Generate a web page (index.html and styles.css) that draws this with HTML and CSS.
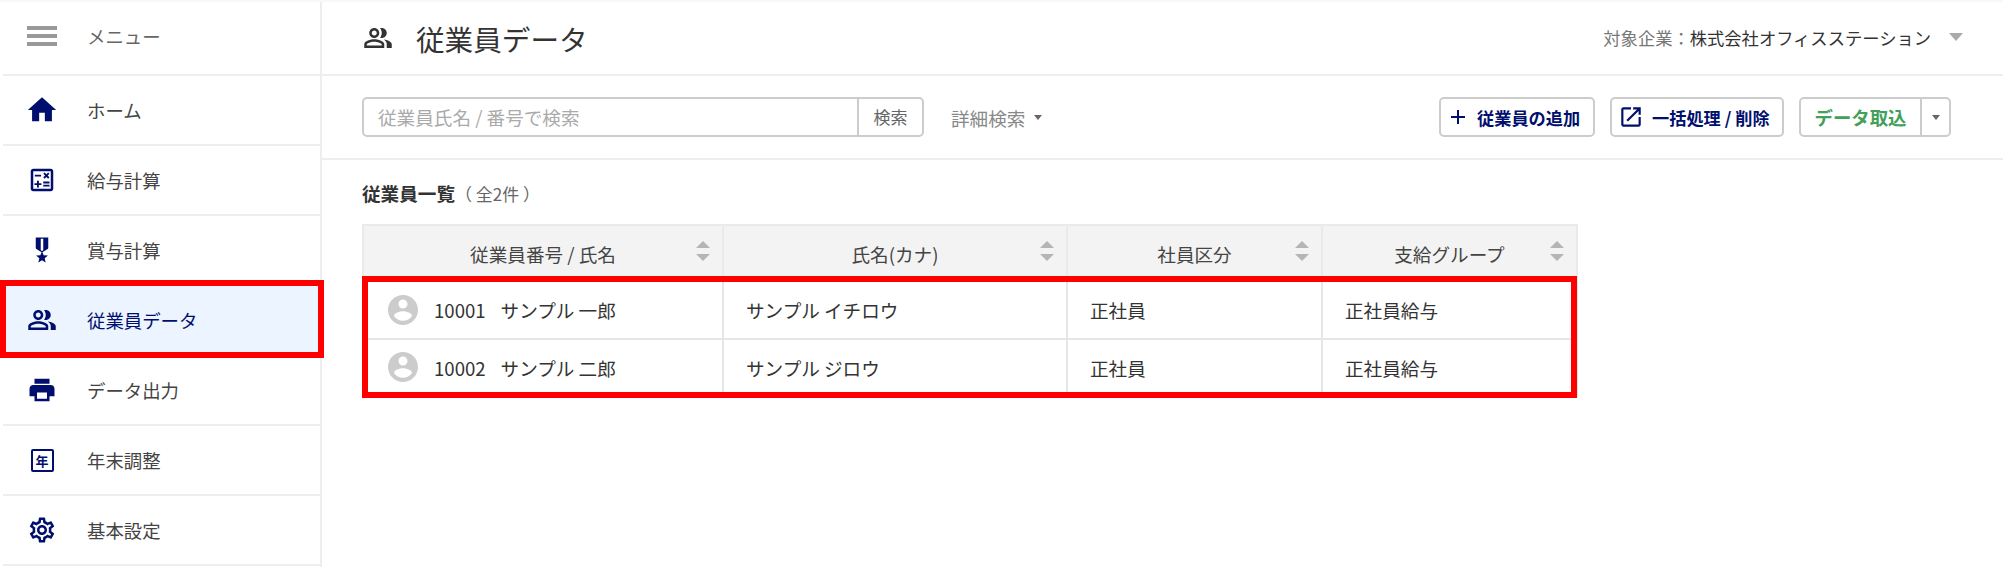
FILE: index.html
```html
<!DOCTYPE html>
<html lang="ja">
<head>
    <meta charset="UTF-8">
    <title>従業員データ</title>
    <link rel="stylesheet" href="styles.css">
</head>
<body>
    <svg class="sprite" xmlns="http://www.w3.org/2000/svg">
        <symbol id="i-home" viewBox="0 0 24 24"><path d="M10 20v-6h4v6h5v-8h3L12 3 2 12h3v8z"/></symbol>
        <symbol id="i-calc" viewBox="0 0 24 24"><path d="M19 3H5c-1.1 0-2 .9-2 2v14c0 1.1.9 2 2 2h14c1.1 0 2-.9 2-2V5c0-1.1-.9-2-2-2zm0 16H5V5h14v14z"/><path d="M6.25 7.72h5v1.5h-5zM13 15.75h5v1.5h-5zM13 13.25h5v1.5h-5zM8 18h1.5v-2h2v-1.5h-2v-2H8v2H6V16h2zM14.09 10.95l1.41-1.41 1.41 1.41 1.06-1.06-1.41-1.42 1.41-1.41L16.91 6 15.5 7.41 14.09 6l-1.06 1.06 1.41 1.41-1.41 1.42z"/></symbol>
        <symbol id="i-medal" viewBox="0 0 24 24"><path d="M17 10.43V2H7v8.43c0 .35.18.68.49.86l4.18 2.51-.99 2.34-3.41.29 2.59 2.24L9.07 22 12 20.23 14.93 22l-.78-3.33 2.59-2.24-3.41-.29-.99-2.34 4.18-2.51c.3-.18.48-.5.48-.86zm-4 1.8l-1 .6-1-.6V3h2v9.23z"/></symbol>
        <symbol id="i-people" viewBox="0 0 24 24"><path d="M16.67 13.13C18.04 14.06 19 15.32 19 17v3h4v-3c0-2.18-3.57-3.47-6.33-3.87z"/><path d="M15 12c2.21 0 4-1.79 4-4s-1.79-4-4-4c-.47 0-.91.1-1.33.24C14.5 5.27 15 6.58 15 8s-.5 2.73-1.33 3.76c.42.14.86.24 1.33.24z"/><path d="M9 12c2.21 0 4-1.79 4-4s-1.79-4-4-4-4 1.79-4 4 1.79 4 4 4zm0-6c1.1 0 2 .9 2 2s-.9 2-2 2-2-.9-2-2 .9-2 2-2z"/><path d="M9 13c-2.67 0-8 1.34-8 4v3h16v-3c0-2.66-5.33-4-8-4zm6 5H3v-.99C3.2 16.29 6.3 15 9 15s5.8 1.29 6 2v1z"/></symbol>
        <symbol id="i-print" viewBox="0 0 24 24"><path d="M19 8H5c-1.66 0-3 1.34-3 3v6h4v4h12v-4h4v-6c0-1.66-1.34-3-3-3zm-3 11H8v-5h8v5zm2-16H6v4h12V3z"/></symbol>
        <symbol id="i-gear" viewBox="0 0 24 24"><path d="M19.43 12.98c.04-.32.07-.64.07-.98 0-.34-.03-.66-.07-.98l2.11-1.65c.19-.15.24-.42.12-.64l-2-3.46c-.09-.16-.26-.25-.44-.25-.06 0-.12.01-.17.03l-2.49 1c-.52-.4-1.08-.73-1.69-.98l-.38-2.65C14.46 2.18 14.25 2 14 2h-4c-.25 0-.46.18-.49.42l-.38 2.65c-.61.25-1.17.59-1.69.98l-2.49-1c-.06-.02-.12-.03-.18-.03-.17 0-.34.09-.43.25l-2 3.46c-.13.22-.07.49.12.64l2.11 1.65c-.04.32-.07.65-.07.98 0 .33.03.66.07.98l-2.11 1.65c-.19.15-.24.42-.12.64l2 3.46c.09.16.26.25.44.25.06 0 .12-.01.17-.03l2.49-1c.52.4 1.08.73 1.69.98l.38 2.65c.03.24.24.42.49.42h4c.25 0 .46-.18.49-.42l.38-2.65c.61-.25 1.17-.59 1.69-.98l2.49 1c.06.02.12.03.18.03.17 0 .34-.09.43-.25l2-3.46c.12-.22.07-.49-.12-.64l-2.11-1.65zm-1.98-1.71c.04.31.05.52.05.73 0 .21-.02.43-.05.73l-.14 1.13.89.7 1.08.84-.7 1.21-1.27-.51-1.04-.42-.9.68c-.43.32-.84.56-1.25.73l-1.06.43-.16 1.13-.2 1.35h-1.4l-.19-1.35-.16-1.13-1.06-.43c-.43-.18-.83-.41-1.23-.71l-.91-.7-1.06.43-1.27.51-.7-1.21 1.08-.84.89-.7-.14-1.13c-.03-.31-.05-.54-.05-.74s.02-.43.05-.73l.14-1.13-.89-.7-1.08-.84.7-1.21 1.27.51 1.04.42.9-.68c.43-.32.84-.56 1.25-.73l1.06-.43.16-1.13.2-1.35h1.39l.19 1.35.16 1.13 1.06.43c.43.18.83.41 1.23.71l.91.7 1.06-.43 1.27-.51.7 1.21-1.07.85-.89.7.14 1.13zM12 8c-2.21 0-4 1.79-4 4s1.79 4 4 4 4-1.79 4-4-1.79-4-4-4zm0 6c-1.1 0-2-.9-2-2s.9-2 2-2 2 .9 2 2-.9 2-2 2z"/></symbol>
        <symbol id="i-add" viewBox="0 0 24 24"><path d="M19 13h-6v6h-2v-6H5v-2h6V5h2v6h6v2z"/></symbol>
        <symbol id="i-open" viewBox="0 0 24 24"><path d="M19 19H5V5h7V3H5c-1.11 0-2 .9-2 2v14c0 1.1.89 2 2 2h14c1.1 0 2-.9 2-2v-7h-2v7zM14 3v2h3.59l-9.83 9.83 1.41 1.41L19 6.41V10h2V3h-7z"/></symbol>
        <symbol id="i-account" viewBox="0 0 24 24"><path d="M12 2C6.48 2 2 6.48 2 12s4.48 10 10 10 10-4.48 10-10S17.52 2 12 2zm0 3c1.66 0 3 1.34 3 3s-1.34 3-3 3-3-1.34-3-3 1.34-3 3-3zm0 14.2c-2.5 0-4.71-1.28-6-3.22.03-1.99 4-3.08 6-3.08 1.99 0 5.97 1.09 6 3.08-1.29 1.94-3.5 3.22-6 3.22z"/></symbol>
    </svg>

    <div class="app">
        <nav class="sidebar">
            <div class="nav-item nav-head">
                <span class="nav-icon"><span class="burger"><i></i><i></i><i></i></span></span>
                <span>メニュー</span>
            </div>
            <a class="nav-item"><span class="nav-icon"><svg class="icon-home"><use href="#i-home"/></svg></span><span>ホーム</span></a>
            <a class="nav-item"><span class="nav-icon"><svg><use href="#i-calc"/></svg></span><span>給与計算</span></a>
            <a class="nav-item"><span class="nav-icon"><svg><use href="#i-medal"/></svg></span><span>賞与計算</span></a>
            <a class="nav-item active"><span class="nav-icon"><svg><use href="#i-people"/></svg></span><span>従業員データ</span></a>
            <a class="nav-item"><span class="nav-icon"><svg><use href="#i-print"/></svg></span><span>データ出力</span></a>
            <a class="nav-item"><span class="nav-icon"><span class="year-box">年</span></span><span>年末調整</span></a>
            <a class="nav-item"><span class="nav-icon"><svg><use href="#i-gear"/></svg></span><span>基本設定</span></a>
            <div class="mark mark-nav"></div>
        </nav>

        <main class="main">
            <header class="topbar">
                <h1 class="page-title"><svg><use href="#i-people"/></svg>従業員データ</h1>
                <div class="company">
                    <span class="company-label">対象企業：</span><span class="company-name">株式会社オフィスステーション</span>
                    <span class="company-caret"></span>
                </div>
            </header>

            <div class="toolbar">
                <div class="search">
                    <div class="search-input">従業員氏名 / 番号で検索</div>
                    <div class="search-btn">検索</div>
                </div>
                <div class="detail-search">詳細検索<span class="caret"></span></div>
                <div class="actions">
                    <div class="btn btn-add"><svg><use href="#i-add"/></svg>従業員の追加</div>
                    <div class="btn btn-bulk"><svg><use href="#i-open"/></svg>一括処理 / 削除</div>
                    <div class="btn-group">
                        <div class="btn-import">データ取込</div>
                        <div class="btn-more"><span class="caret"></span></div>
                    </div>
                </div>
            </div>

            <section class="list">
                <h2 class="list-title">従業員一覧<span class="list-count">（ 全2件 ）</span></h2>
                <div class="table-wrap">
                    <table class="staff-table">
                        <colgroup>
                            <col class="col-name"><col class="col-kana"><col class="col-type"><col class="col-group">
                        </colgroup>
                        <thead>
                            <tr>
                                <th>従業員番号 / 氏名<span class="sort"></span></th>
                                <th>氏名(カナ)<span class="sort"></span></th>
                                <th>社員区分<span class="sort"></span></th>
                                <th>支給グループ<span class="sort"></span></th>
                            </tr>
                        </thead>
                        <tbody>
                            <tr>
                                <td><div class="person"><svg><use href="#i-account"/></svg><span class="person-no">10001</span><span>サンプル 一郎</span></div></td>
                                <td>サンプル イチロウ</td>
                                <td>正社員</td>
                                <td>正社員給与</td>
                            </tr>
                            <tr>
                                <td><div class="person"><svg><use href="#i-account"/></svg><span class="person-no">10002</span><span>サンプル 二郎</span></div></td>
                                <td>サンプル ジロウ</td>
                                <td>正社員</td>
                                <td>正社員給与</td>
                            </tr>
                        </tbody>
                    </table>
                    <div class="mark mark-rows"></div>
                </div>
            </section>
        </main>
    </div>
</body>
</html>
```

FILE: styles.css
```css
* {
    margin: 0;
    padding: 0;
    box-sizing: border-box;
}

body {
    background: #fff;
    color: #333;
    font-family: "Noto Sans CJK JP", "Noto Sans", sans-serif;
    font-size: 18.6px;
    overflow: hidden;
}

.sprite {
    display: none;
}

.app {
    display: flex;
    height: 567px;
    border-top: 2px solid #f8f8f8;
}

/* sidebar */
.sidebar {
    position: relative;
    width: 322px;
    flex-shrink: 0;
    padding-left: 3px;
    border-right: 2px solid #eee;
    font-size: 18.4px;
}

.nav-item {
    display: flex;
    align-items: center;
    height: 70px;
    border-bottom: 2px solid #eee;
    color: #444;
}

.nav-head {
    height: 74px;
    padding-bottom: 4px;
    color: #666;
}

.nav-icon {
    display: flex;
    justify-content: center;
    align-items: center;
    width: 78px;
    margin-right: 6px;
    flex-shrink: 0;
    color: #000f6e;
}

.nav-icon svg {
    width: 30px;
    height: 30px;
    fill: currentColor;
}

.nav-icon .icon-home {
    width: 34px;
    height: 34px;
}

.nav-item.active {
    background: #ecf4ff;
    color: #000f6e;
}

.burger {
    display: flex;
    flex-direction: column;
    gap: 4px;
    width: 30px;
}

.burger i {
    display: block;
    height: 4px;
    background: #999;
}

.year-box {
    display: flex;
    justify-content: center;
    align-items: center;
    width: 23px;
    height: 23px;
    border: 2px solid #000f6e;
    border-radius: 2px;
    font-size: 13px;
    font-weight: 700;
    line-height: 1;
}

/* highlights drawn over the screen */
.mark {
    position: absolute;
    border: 6px solid #f00;
    pointer-events: none;
}

.mark-nav {
    left: 0;
    top: 278px;
    width: 324px;
    height: 78px;
}

.mark-rows {
    left: 0;
    top: 52px;
    width: 1215px;
    height: 122px;
}

/* main */
.main {
    flex: 1;
    min-width: 0;
}

.topbar {
    display: flex;
    justify-content: space-between;
    align-items: center;
    height: 74px;
    padding: 0 40px 0 41px;
    border-bottom: 2px solid #eee;
}

.page-title {
    display: flex;
    align-items: center;
    font-size: 28.6px;
    font-weight: 400;
    color: #333;
}

.page-title svg {
    width: 30px;
    height: 30px;
    margin-right: 23px;
    fill: #333;
}

.company {
    display: flex;
    align-items: center;
    padding-bottom: 2px;
    font-size: 17.3px;
}

.company-label {
    color: #777;
}

.company-name {
    color: #333;
}

.company-caret {
    width: 0;
    height: 0;
    margin-left: 18px;
    border-left: 7px solid transparent;
    border-right: 7px solid transparent;
    border-top: 8px solid #aaa;
}

.toolbar {
    display: flex;
    align-items: center;
    height: 84px;
    padding: 0 52px 0 40px;
    border-bottom: 2px solid #eee;
}

.search {
    display: flex;
    width: 562px;
    height: 40px;
    border: 2px solid #ccc;
    border-radius: 5px;
}

.search-input {
    flex: 1;
    padding-left: 14px;
    line-height: 36px;
    color: #aaa;
}

.search-btn {
    width: 65px;
    border-left: 2px solid #ccc;
    font-size: 17px;
    line-height: 36px;
    text-align: center;
    color: #666;
}

.detail-search {
    display: flex;
    align-items: center;
    margin-left: 27px;
    color: #888;
}

.caret {
    display: inline-block;
    width: 0;
    height: 0;
    border-left: 4px solid transparent;
    border-right: 4px solid transparent;
    border-top: 5px solid #666;
}

.detail-search .caret {
    margin-left: 9px;
}

.actions {
    display: flex;
    gap: 15px;
    margin-left: auto;
}

.btn {
    display: flex;
    align-items: center;
    height: 40px;
    border: 2px solid #ccc;
    border-radius: 5px;
    font-size: 17.2px;
    font-weight: 700;
    color: #000f6e;
}

.btn svg {
    fill: #000f6e;
}

.btn-add {
    width: 156px;
    padding-left: 5px;
}

.btn-add svg {
    width: 24px;
    height: 24px;
    margin-right: 7px;
}

.btn-bulk {
    width: 174px;
    padding-left: 6px;
}

.btn-bulk svg {
    width: 26px;
    height: 26px;
    margin-right: 8px;
}

.btn-group {
    display: flex;
    width: 152px;
    height: 40px;
    border: 2px solid #ccc;
    border-radius: 5px;
}

.btn-import {
    flex: 1;
    border-right: 2px solid #ccc;
    font-size: 18.4px;
    font-weight: 700;
    line-height: 36px;
    text-align: center;
    color: #43a05a;
}

.btn-more {
    display: flex;
    justify-content: center;
    align-items: center;
    width: 27px;
}

/* list */
.list {
    padding: 20px 40px;
}

.list-title {
    font-size: 18.6px;
    font-weight: 700;
    line-height: 26px;
    color: #333;
    margin-bottom: 17px;
}

.list-count {
    font-size: 17px;
    font-weight: 400;
    color: #666;
}

.table-wrap {
    position: relative;
    width: 1215px;
}

.staff-table {
    width: 1214px;
    border-collapse: collapse;
    table-layout: fixed;
}

.col-name { width: 360px; }
.col-kana { width: 344px; }
.col-type { width: 255px; }
.col-group { width: 255px; }

.staff-table th {
    position: relative;
    height: 56px;
    background: #f3f3f3;
    border: 2px solid #eaeaea;
    font-weight: 400;
    color: #444;
    text-align: center;
}

.sort {
    position: absolute;
    right: 12px;
    top: 13px;
    width: 14px;
    height: 24px;
}

.sort::before,
.sort::after {
    content: "";
    position: absolute;
    left: 0;
    width: 0;
    height: 0;
    border-left: 7px solid transparent;
    border-right: 7px solid transparent;
}

.sort::before {
    top: 2px;
    border-bottom: 7px solid #b5b5b5;
}

.sort::after {
    bottom: 2px;
    border-top: 7px solid #b5b5b5;
}

.staff-table td {
    height: 57.5px;
    border: 2px solid #e6e6e6;
    padding-left: 22px;
    color: #333;
}

.person {
    display: flex;
    align-items: center;
}

.person svg {
    width: 36px;
    height: 36px;
    margin-left: -1px;
    margin-right: 13px;
    fill: #ccc;
}

.person-no {
    margin-right: 15px;
}
```
